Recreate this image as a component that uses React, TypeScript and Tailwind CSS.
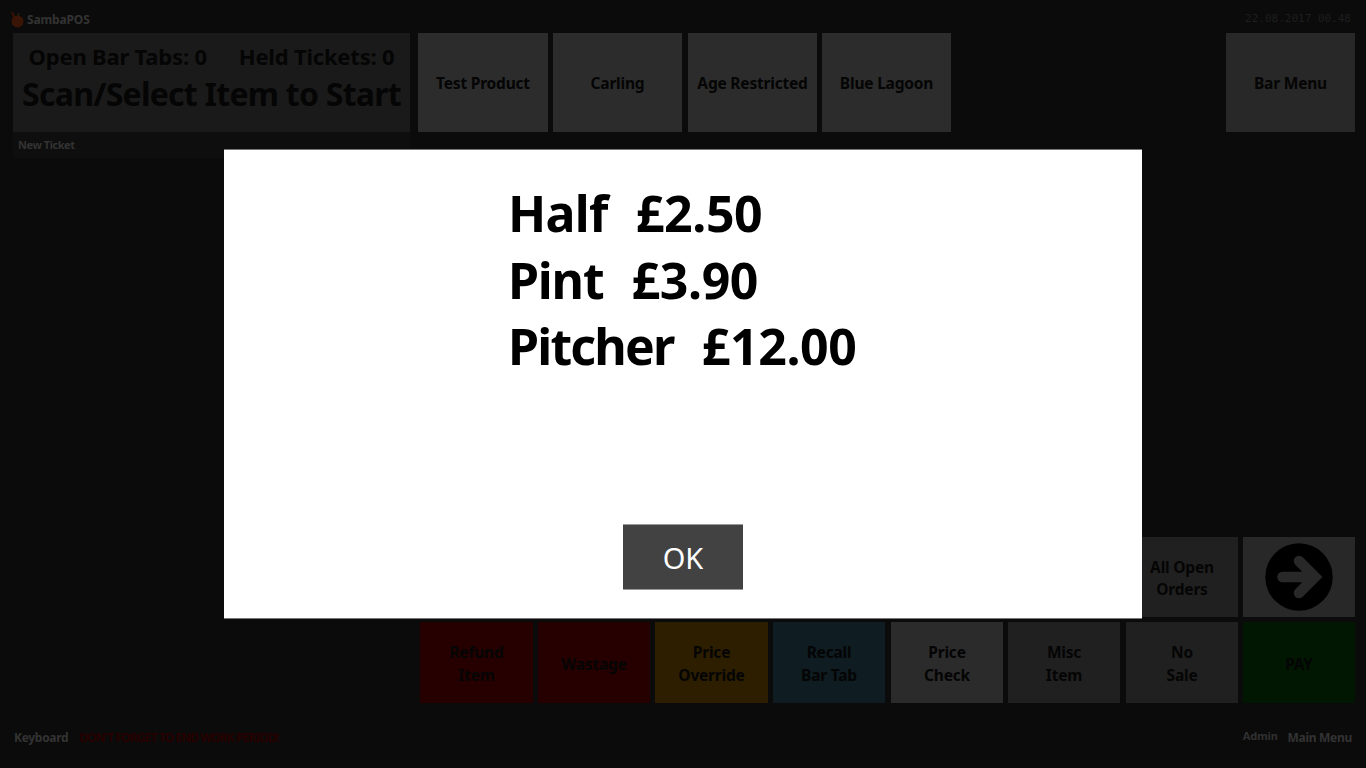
const font = { fontFamily: '"Noto Sans", "Open Sans", sans-serif' };

function Tile({ label, className = "" }: { label: string; className?: string }) {
  return (
    <div className={`flex items-center justify-center text-center font-bold text-[15.5px] tracking-[-0.2px] text-[#050505] whitespace-pre-line ${className}`}>
      {label}
    </div>
  );
}

function ArrowTile() {
  return (
    <div className="w-[112px] h-[80px] bg-[#282828] flex items-center justify-center">
      <svg width="68" height="68" viewBox="0 0 68 68">
        <circle cx="34" cy="34" r="33.7" fill="#000" />
        <path d="M17.5 34H50M34 18L50 34L34 50" fill="none" stroke="#282828" strokeWidth="10.6" strokeLinejoin="miter" strokeLinecap="round" />
      </svg>
    </div>
  );
}

export default function App() {
  return (
    <div style={font} className="relative w-[1366px] h-[768px] overflow-hidden bg-[#0b0b0b] flex flex-col">
      <div className="h-[33px] flex items-center justify-between pl-[10px] pr-[15px]">
        <div className="flex items-center gap-[3px] mt-[6px]">
          <svg width="14" height="18" viewBox="0 0 14 18">
            <path d="M0 0.5L4 1.5L5 4L2 4.5Z" fill="#2e1106" />
            <path d="M7 4L9 2L10 3L8.5 5Z" fill="#24240c" />
            <circle cx="7.5" cy="10.5" r="6" fill="#3a1406" />
            <path d="M2 4L5 4.5L4 8Z" fill="#3a1406" />
          </svg>
          <span className="font-bold text-[12px] tracking-[-0.15px] text-[#333333]">SambaPOS</span>
        </div>
        <span className="mt-[6px] text-[11px] text-[#1e1e1e]" style={{ fontFamily: '"DejaVu Sans Mono", monospace' }}>22.08.2017 00.48</span>
      </div>

      <div className="flex h-[99px] pl-[13px] pr-[11px]">
        <div className="w-[397px] bg-[#1a1a1a] flex flex-col items-center text-[#050505] font-bold">
          <div className="flex gap-[32px] text-[22px] leading-[30px] mt-[8px] tracking-[-0.2px] whitespace-nowrap">
            <span>Open Bar Tabs: 0</span>
            <span>Held Tickets: 0</span>
          </div>
          <div className="text-[32px] leading-[44px] mt-[1px] tracking-[-0.75px] whitespace-nowrap">Scan/Select Item to Start</div>
        </div>
        <div className="flex ml-[8px]">
          <Tile label="Test Product" className="w-[130px] pt-[3px] bg-[#2c2c2c]" />
          <Tile label="Carling" className="w-[129px] ml-[5px] pt-[3px] bg-[#2c2c2c]" />
          <Tile label="Age Restricted" className="w-[129px] ml-[6px] pt-[3px] bg-[#2c2c2c]" />
          <Tile label="Blue Lagoon" className="w-[129px] ml-[5px] pt-[3px] bg-[#2c2c2c]" />
        </div>
        <Tile label="Bar Menu" className="w-[129px] ml-auto pt-[3px] bg-[#282828]" />
      </div>

      <div className="w-[397px] h-[26px] ml-[13px] bg-[#0e0e0e] pl-[5px] pt-[5px] font-bold text-[11px] leading-[16px] tracking-[-0.45px] text-[#333333]">
        New Ticket
      </div>

      <div className="flex-1 flex flex-col items-end pr-[11px] pt-[379px]">
        <div className="flex gap-[5px] mb-[5px]">
          <Tile label={"All Open\nOrders"} className="w-[112px] h-[80px] pt-[2px] bg-[#202020] leading-[22px]" />
          <ArrowTile />
        </div>
        <div className="flex gap-[5px] h-[81px] leading-[23px]">
          <Tile label={"Refund\nItem"} className="w-[113px] pt-[2px] bg-[#260000]" />
          <Tile label="Wastage" className="w-[112px] pt-[4px] bg-[#260000]" />
          <Tile label={"Price\nOverride"} className="w-[113px] pt-[2px] bg-[#2e1e00]" />
          <Tile label={"Recall\nBar Tab"} className="w-[112px] pt-[2px] bg-[#0f1c21]" />
          <Tile label={"Price\nCheck"} className="w-[112px] pt-[2px] bg-[#2b2b2b] ml-[1px]" />
          <Tile label={"Misc\nItem"} className="w-[112px] pt-[2px] bg-[#202020]" />
          <Tile label={"No\nSale"} className="w-[112px] pt-[2px] bg-[#202020] ml-[1px]" />
          <Tile label="PAY" className="w-[112px] pt-[4px] bg-[#011702]" />
        </div>
      </div>

      <div className="h-[65px] flex items-start pl-[14px] pr-[11px] pt-[26px] font-bold text-[12px] leading-[18px]">
        <span className="text-[#333333] tracking-[-0.3px]">Keyboard</span>
        <span className="ml-[11px] text-[#260000] tracking-[-0.87px]">DON'T FORGET TO END WORK PERIOD!</span>
        <span className="ml-auto -mt-[2px] text-[11px] text-[#303030] tracking-[-0.2px]">Admin</span>
        <span className="ml-[10px] text-[#333333] tracking-[-0.3px] pr-[3px]">Main Menu</span>
      </div>

      <div className="absolute left-[224px] top-[149px] w-[918px] h-[470px] bg-white flex flex-col border-t border-b border-[#777777]">
        <div className="pl-[284px] pt-[30px] font-bold text-[50px] leading-[66.5px] text-black tracking-[-0.4px] [word-spacing:1.5px]">
          <div className="whitespace-pre"><span className="tracking-[-0.7px]">Half</span>  £2.50</div>
          <div className="whitespace-pre"><span className="tracking-[-1.2px]">Pint</span>  £3.90</div>
          <div className="whitespace-pre"><span className="tracking-[-1.8px]">Pitcher</span>  £12.00</div>
        </div>
        <div className="mt-auto mb-[28px] self-center w-[120px] h-[66px] pt-[1px] bg-[#424242] border-y border-[#999999] flex items-center justify-center text-white text-[29px]">
          OK
        </div>
      </div>
    </div>
  );
}
